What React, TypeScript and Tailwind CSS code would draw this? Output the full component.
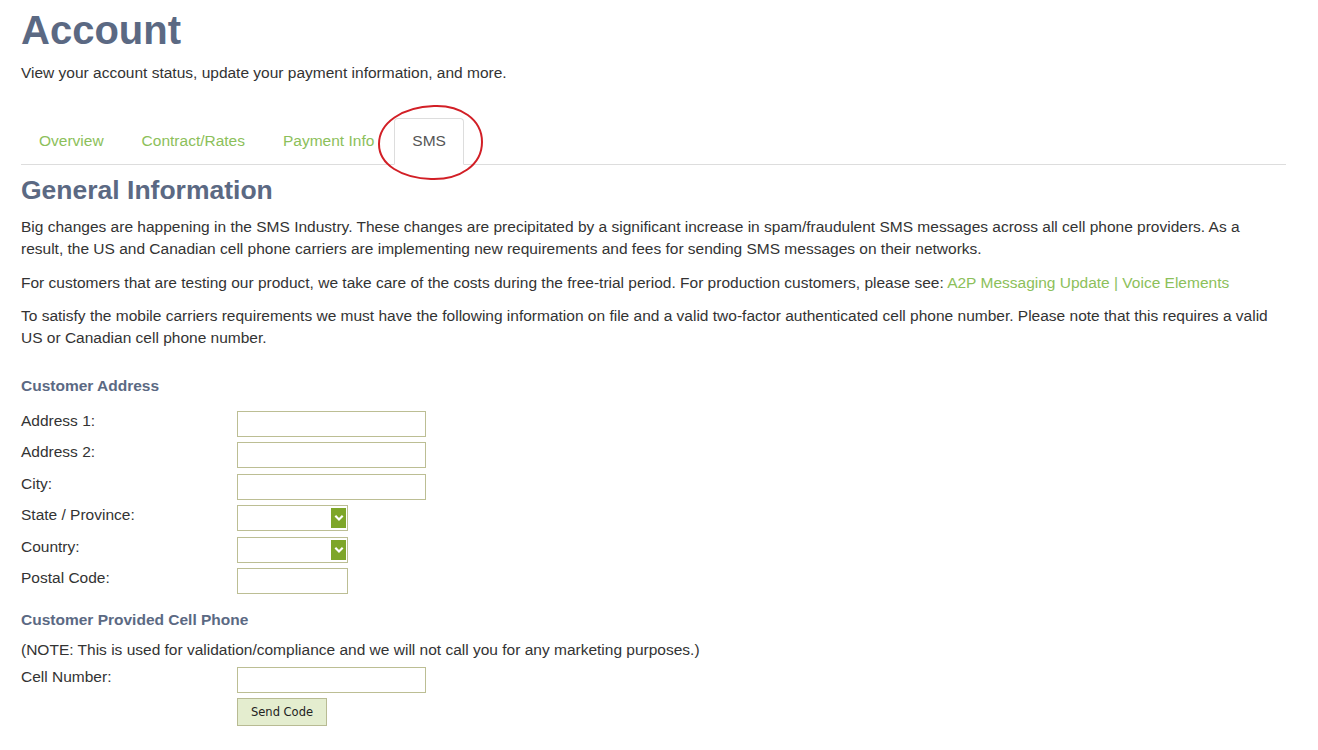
import React from "react";

const inputCls = "h-[26px] border border-[#bcbe94] bg-white";

function Select() {
  return (
    <div className={`relative w-[111px] ${inputCls}`}>
      <div className="absolute right-[1px] top-[2px] w-[15px] h-[20px] bg-[#7ea629] flex items-center justify-center">
        <svg width="10" height="8" viewBox="0 0 10 8">
          <path d="M1.3 1.8 L5 5.5 L8.7 1.8" stroke="#fff" strokeWidth="2.2" fill="none" />
        </svg>
      </div>
    </div>
  );
}

function Row({ label, children }: { label: string; children: React.ReactNode }) {
  return (
    <div className="flex items-start h-[31.4px]">
      <div className="w-[216px] leading-[22px] -mt-[1px]">{label}</div>
      {children}
    </div>
  );
}

export default function App() {
  return (
    <div
      className="bg-white text-[#333] text-[15.5px] leading-[22px] pl-[21px] pt-[8px] w-[1318px] h-[750px] overflow-hidden"
      style={{ fontFamily: '"Liberation Sans", Arial, sans-serif' }}
    >
      <div className="w-[1265px]">
        <h1 className="text-[40px] leading-[44px] font-bold text-[#5b6983]">Account</h1>
        <p className="mt-[10px]">View your account status, update your payment information, and more.</p>

        <div className="relative mt-[34px] flex border-b border-[#ddd]">
          <div className="px-[17px] py-[11px] mr-[2px] border border-transparent text-[#8cc05a]">Overview</div>
          <div className="px-[17px] py-[11px] mr-[2px] border border-transparent text-[#8cc05a]">Contract/Rates</div>
          <div className="px-[17px] py-[11px] mr-[2px] border border-transparent text-[#8cc05a]">Payment Info</div>
          <div className="px-[17px] py-[11px] mr-[2px] border border-[#ddd] border-b-white -mb-[1px] rounded-t-[4px] bg-white text-[#555]">SMS</div>
          <svg className="absolute left-[355px] top-[-15px] pointer-events-none" width="110" height="80" viewBox="0 0 110 80">
            <path
              d="M58 3 C 84 2, 106 16, 106 39 C 106 62, 84 77, 55 76 C 26 75, 3 62, 3 41 C 3 20, 26 4, 58 3 Z"
              fill="none"
              stroke="#d21f26"
              strokeWidth="2"
            />
          </svg>
        </div>

        <h2 className="text-[26.5px] leading-[30px] font-bold text-[#5b6983] mt-[10px]">General Information</h2>
        <p className="mt-[11px]">
          Big changes are happening in the SMS Industry. These changes are precipitated by a significant increase in spam/fraudulent SMS messages across all cell phone providers. As a result, the US and Canadian cell phone carriers are implementing new requirements and fees for sending SMS messages on their networks.
        </p>
        <p className="mt-[12px]">
          For customers that are testing our product, we take care of the costs during the free-trial period. For production customers, please see:{" "}
          <span className="text-[#8cc05a]">A2P Messaging Update | Voice Elements</span>
        </p>
        <p className="mt-[11px]">
          To satisfy the mobile carriers requirements we must have the following information on file and a valid two-factor authenticated cell phone number. Please note that this requires a valid US or Canadian cell phone number.
        </p>

        <h3 className="mt-[26px] font-bold text-[#5b6983]">Customer Address</h3>
        <div className="mt-[14px]">
          <Row label="Address 1:"><div className={`w-[189px] ${inputCls}`} /></Row>
          <Row label="Address 2:"><div className={`w-[189px] ${inputCls}`} /></Row>
          <Row label="City:"><div className={`w-[189px] ${inputCls}`} /></Row>
          <Row label="State / Province:"><Select /></Row>
          <Row label="Country:"><Select /></Row>
          <Row label="Postal Code:"><div className={`w-[111px] ${inputCls}`} /></Row>
        </div>

        <h3 className="mt-[9.5px] font-bold text-[#5b6983]">Customer Provided Cell Phone</h3>
        <p className="mt-[8px]">(NOTE: This is used for validation/compliance and we will not call you for any marketing purposes.)</p>
        <div className="mt-[6px]">
          <Row label="Cell Number:"><div className={`w-[189px] ${inputCls}`} /></Row>
        </div>
        <div className="pl-[216px] -mt-[0.5px]">
          <button
            className="w-[90px] h-[28px] border border-[#b8bb93] bg-[#e4edcf] text-[11.5px] text-[#222]"
            style={{ fontFamily: '"DejaVu Sans", Verdana, sans-serif' }}
          >
            Send Code
          </button>
        </div>
      </div>
    </div>
  );
}
